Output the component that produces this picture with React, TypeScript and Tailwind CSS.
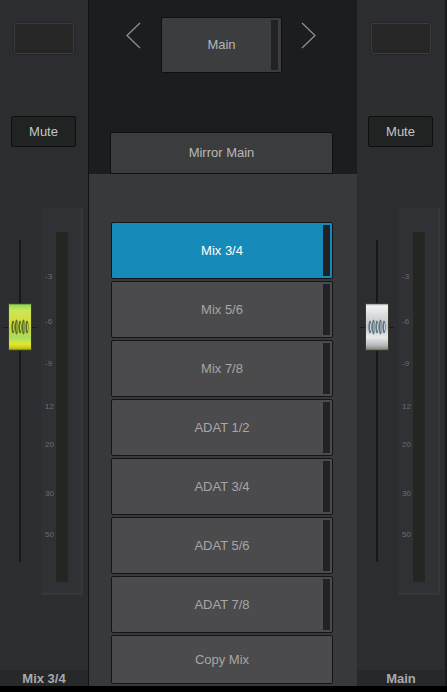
import React from "react";

type CapTone = "green" | "silver";

function FaderCap({ tone }: { tone: CapTone }) {
  const id = tone === "green" ? "capG" : "capS";
  const stops =
    tone === "green"
      ? [
          ["0", "#4f7a2a"],
          ["0.04", "#9ad85a"],
          ["0.14", "#c9e65a"],
          ["0.35", "#d3df3c"],
          ["0.55", "#c4d636"],
          ["0.72", "#a7dc62"],
          ["0.86", "#dfe832"],
          ["0.95", "#c9cc10"],
          ["1", "#6b6a10"],
        ]
      : [
          ["0", "#7d7f82"],
          ["0.05", "#f4f5f6"],
          ["0.25", "#d9dadc"],
          ["0.5", "#c4c6c9"],
          ["0.72", "#e9eaeb"],
          ["0.88", "#b9bbbe"],
          ["0.96", "#8e9093"],
          ["1", "#55575a"],
        ];
  const grip = tone === "green" ? "#5a6c26" : "#5e7280";
  const gripLight = tone === "green" ? "#bcd44c" : "#c9d6de";
  return (
    <svg width="24" height="48" viewBox="0 0 24 48">
      <defs>
        <linearGradient id={id} x1="0" y1="0" x2="0" y2="1">
          {stops.map(([o, c]) => (
            <stop key={o} offset={o} stopColor={c} />
          ))}
        </linearGradient>
      </defs>
      <rect x="0.5" y="0.5" width="23" height="47" rx="1" fill={`url(#${id})`} stroke="#3a3a2a" strokeWidth="1" />
      {/* grip ridges */}
      {[5, 8.5, 12, 15.5, 19].map((x, i) => (
        <g key={x}>
          <ellipse cx={x} cy={24} rx="1.6" ry={i % 2 ? 7.5 : 6.5} fill={grip} />
          <ellipse cx={x + 0.5} cy={24} rx="0.5" ry={i % 2 ? 5 : 4} fill={gripLight} />
        </g>
      ))}
    </svg>
  );
}

const scale: [string, number][] = [
  ["-3", 65],
  ["-6", 110],
  ["-9", 152],
  ["12", 195],
  ["20", 233],
  ["30", 282],
  ["50", 323],
];

function Strip({ label, tone }: { label: string; tone: CapTone }) {
  return (
    <div className="flex h-full flex-col bg-[#2c2d30]">
      <div className="ml-[14px] mt-[23px] h-[31px] w-[60px] rounded-[2px] border border-[#3a3b3d] bg-[#262627] shadow-[0_0_2px_#1a1a1a]" />
      <div className="ml-[11px] mt-[62px] flex h-[31px] w-[65px] items-center justify-center rounded-[2px] border border-[#0e0f0f] bg-[#1f2322] text-[13px] text-[#c4c6c6]">
        Mute
      </div>
      <div className="mt-[61px] flex h-[388px]">
        <div className="relative w-[41px]">
          <div className="absolute left-[19px] top-[32px] h-[322px] w-[2px] bg-[#161718]" />
          <div className="absolute left-[3px] top-[119px] h-px w-[34px] bg-[#1a1b1b]" />
          <div className="absolute left-[8px] top-[95px]">
            <FaderCap tone={tone} />
          </div>
        </div>
        <div className="relative h-[387px] w-[42px] border-b-2 border-r-2 border-[#36373a] bg-[#303134]">
          <div className="absolute left-[15px] top-[24px] h-[350px] w-[12px] bg-[#232621]" />
          {scale.map(([t, y]) => (
            <span
              key={t}
              className="absolute left-[4px] text-[8px] leading-none text-[#6c6d70]"
              style={{ top: y }}
            >
              {t}
            </span>
          ))}
        </div>
      </div>
      <div className="flex-1" />
      <div className="flex h-[16px] items-center justify-center bg-[#272829] text-[13px] font-bold leading-none text-[#a9aaac]">
        {label}
      </div>
    </div>
  );
}

function ListButton({ text, active, tall = true }: { text: string; active?: boolean; tall?: boolean }) {
  return (
    <div
      className={`relative flex w-[222px] items-center justify-center rounded-[2px] border border-[#141516] text-[13px] ${
        tall ? "h-[57px]" : "h-[49px]"
      } ${active ? "bg-[#168bb9] text-white" : "bg-[#4b4b4d] text-[#a6a6a8]"}`}
    >
      {text}
      {tall && <div className="absolute right-[2px] top-[2px] bottom-[2px] w-[7px] bg-[#222224]" />}
    </div>
  );
}

export default function App() {
  const items = ["Mix 3/4", "Mix 5/6", "Mix 7/8", "ADAT 1/2", "ADAT 3/4", "ADAT 5/6", "ADAT 7/8"];
  return (
    <div className="h-[692px] w-[447px] overflow-hidden bg-black font-['Liberation_Sans',Arial,sans-serif]">
      <div className="flex h-[686px]">
        <div className="w-[88px]">
          <Strip label="Mix 3/4" tone="green" />
        </div>
        <div className="w-px bg-[#111213]" />
        <div className="flex w-[268px] flex-col">
          <div className="h-[174px] bg-[#1c1d1f]">
            <div className="flex h-[73px] items-start pt-[17px]">
              <svg className="ml-[36px] mt-[5px]" width="17" height="27" viewBox="0 0 17 27">
                <path d="M15 1 L2 13.5 L15 26" fill="none" stroke="#8d8e90" strokeWidth="1.3" />
              </svg>
              <div className="relative ml-[19px] flex h-[56px] w-[121px] items-center justify-center rounded-[2px] border border-[#0f1011] bg-[#3c3d3f] text-[13px] text-[#b4b5b7]">
                Main
                <div className="absolute right-[3px] top-[2px] bottom-[2px] w-[7px] bg-[#222224]" />
              </div>
              <svg className="ml-[18px] mt-[5px]" width="17" height="27" viewBox="0 0 17 27">
                <path d="M2 1 L15 13.5 L2 26" fill="none" stroke="#8d8e90" strokeWidth="1.3" />
              </svg>
            </div>
            <div className="ml-[21px] mt-[59px] flex h-[42px] w-[223px] items-center justify-center rounded-[2px] border border-[#0f1011] bg-[#3b3c3e] text-[13px] text-[#b7b8ba]">
              Mirror Main
            </div>
          </div>
          <div className="flex flex-1 flex-col gap-[2px] bg-[#38393c] pl-[22px] pt-[48px]">
            {items.map((t, i) => (
              <ListButton key={t} text={t} active={i === 0} />
            ))}
            <ListButton text="Copy Mix" tall={false} />
          </div>
        </div>
        <div className="flex flex-1">
          <div className="w-[88px]">
            <Strip label="Main" tone="silver" />
          </div>
          <div className="flex-1 bg-[#1a1b1c]" />
        </div>
      </div>
    </div>
  );
}
